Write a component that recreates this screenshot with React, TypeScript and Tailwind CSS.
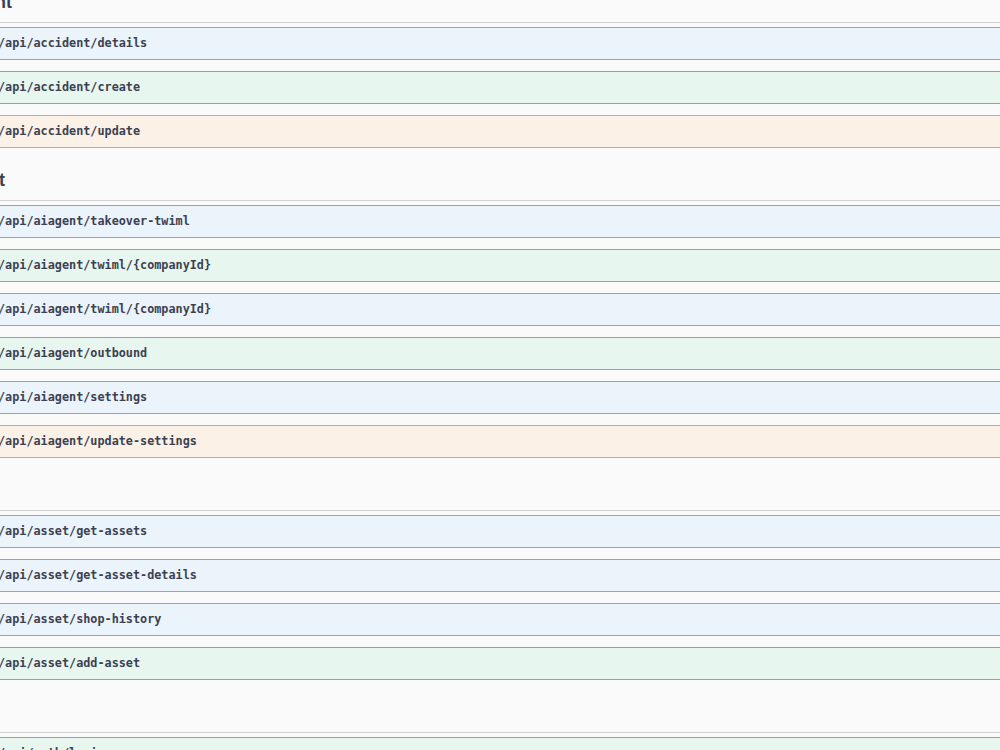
type Method = "get" | "post" | "put";

type Op = { method: Method; path: string };

type Tag = { name: string; ops: Op[] };

const TAGS: Tag[] = [
  {
    name: "Accident",
    ops: [
      { method: "get", path: "/api/accident/details" },
      { method: "post", path: "/api/accident/create" },
      { method: "put", path: "/api/accident/update" },
    ],
  },
  {
    name: "AIAgent",
    ops: [
      { method: "get", path: "/api/aiagent/takeover-twiml" },
      { method: "post", path: "/api/aiagent/twiml/{companyId}" },
      { method: "get", path: "/api/aiagent/twiml/{companyId}" },
      { method: "post", path: "/api/aiagent/outbound" },
      { method: "get", path: "/api/aiagent/settings" },
      { method: "put", path: "/api/aiagent/update-settings" },
    ],
  },
  {
    name: "Asset",
    ops: [
      { method: "get", path: "/api/asset/get-assets" },
      { method: "get", path: "/api/asset/get-asset-details" },
      { method: "get", path: "/api/asset/shop-history" },
      { method: "post", path: "/api/asset/add-asset" },
    ],
  },
  {
    name: "Auth",
    ops: [{ method: "post", path: "/api/auth/login" }],
  },
];

// swagger-ui colours, block backgrounds are the border colour at 10% over #fafafa
const STYLES: Record<Method, { block: string; badge: string }> = {
  get: {
    block: "bg-[#ebf3fb] border-[#61affe]",
    badge: "bg-[#61affe]",
  },
  post: {
    block: "bg-[#e8f6f0] border-[#49cc90]",
    badge: "bg-[#49cc90]",
  },
  put: {
    block: "bg-[#fbf1e6] border-[#fca130]",
    badge: "bg-[#fca130]",
  },
};

function OpBlock({ op }: { op: Op }) {
  const style = STYLES[op.method];
  return (
    <div
      className={`h-[33px] mb-[11px] border rounded-[3px] flex items-center px-[4px] ${style.block}`}
    >
      <span
        className={`w-[60px] h-[23px] rounded-[3px] flex items-center justify-center text-white text-[10.5px] font-bold uppercase ${style.badge}`}
        style={{ fontFamily: "'Liberation Sans', sans-serif" }}
      >
        {op.method}
      </span>
      <span
        className="ml-[13px] text-[11.8px] font-bold text-[#3b4151] whitespace-nowrap"
        style={{ fontFamily: "'DejaVu Sans Mono', 'Liberation Mono', monospace" }}
      >
        {op.path}
      </span>
    </div>
  );
}

function TagSection({ tag }: { tag: Tag }) {
  return (
    <div>
      <div className="h-[42px] border-b border-[#d0d1d4] mb-[4px] flex items-center pl-[16px]">
        <h3
          className="text-[18px] font-bold text-[#3b4151] leading-none"
          style={{ fontFamily: "'Liberation Sans', Arial, sans-serif" }}
        >
          {tag.name}
        </h3>
      </div>
      {tag.ops.map((op, i) => (
        <OpBlock key={i} op={op} />
      ))}
    </div>
  );
}

export default function App() {
  // the view is scrolled: tag names and method badges sit left of the window
  return (
    <div className="w-[1000px] h-[750px] overflow-hidden bg-[#fafafa]">
      <div className="-mt-[19px] -ml-[80px] w-[1160px]">
        {TAGS.map((tag) => (
          <TagSection key={tag.name} tag={tag} />
        ))}
      </div>
    </div>
  );
}
